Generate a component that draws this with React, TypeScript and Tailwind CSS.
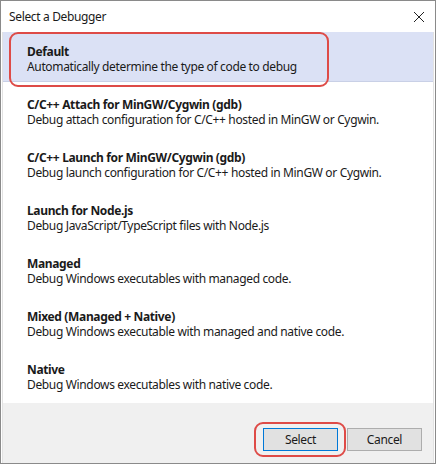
import React from "react";

const items = [
  { t: "Default", d: "Automatically determine the type of code to debug" },
  { t: "C/C++ Attach for MinGW/Cygwin (gdb)", d: "Debug attach configuration for C/C++ hosted in MinGW or Cygwin." },
  { t: "C/C++ Launch for MinGW/Cygwin (gdb)", d: "Debug launch configuration for C/C++ hosted in MinGW or Cygwin." },
  { t: "Launch for Node.js", d: "Debug JavaScript/TypeScript files with Node.js" },
  { t: "Managed", d: "Debug Windows executables with managed code." },
  { t: "Mixed (Managed + Native)", d: "Debug Windows executable with managed and native code." },
  { t: "Native", d: "Debug Windows executables with native code." },
];

export default function App() {
  return (
    <div
      className="w-[436px] h-[464px] bg-white border border-[#8a8a8a] flex flex-col text-[12px] tracking-[-0.35px] text-[#1a1a1a] leading-[15px]"
      style={{ fontFamily: '"Segoe UI", "Noto Sans", sans-serif' }}
    >
      <div className="h-[31px] flex items-center justify-between pl-[8px] pr-[10px] shrink-0">
        <span>Select a Debugger</span>
        <svg width="12" height="12" viewBox="0 0 12 12">
          <path d="M1 1 L11 11 M11 1 L1 11" stroke="#222" strokeWidth="1" />
        </svg>
      </div>
      <div className="flex-1 flex flex-col mx-[1px] border-x border-[#e2e2e2]">
        <div className="relative flex flex-col h-[371px]">
          {items.map((it, i) => (
            <div
              key={i}
              className={
                "h-[50px] mb-[3px] pl-[24px] pt-[12px] flex flex-col " +
                (i === 0 ? "bg-[#dbe1f5] border-b border-[#c9d0e6]" : "")
              }
            >
              <span className="font-bold">{it.t}</span>
              <span>{it.d}</span>
            </div>
          ))}
          <div className="absolute left-[6px] top-[0px] w-[320px] h-[55px] border-2 border-[#de4b47] rounded-[9px]" />
        </div>
        <div className="flex-1 bg-[#f0f0f0] flex justify-end items-start pt-[25px] pr-[11px] gap-[9px]">
          <div className="relative">
            <button className="w-[75px] h-[23px] bg-[#e1e1e1] border border-[#0078d7] text-[12px] text-[#1a1a1a]">
              Select
            </button>
            <div className="absolute left-[-9px] top-[-6px] w-[92px] h-[35px] border-2 border-[#de4b47] rounded-[9px]" />
          </div>
          <button className="w-[75px] h-[23px] bg-[#e1e1e1] border border-[#adadad] text-[12px] text-[#1a1a1a]">
            Cancel
          </button>
        </div>
      </div>
    </div>
  );
}
